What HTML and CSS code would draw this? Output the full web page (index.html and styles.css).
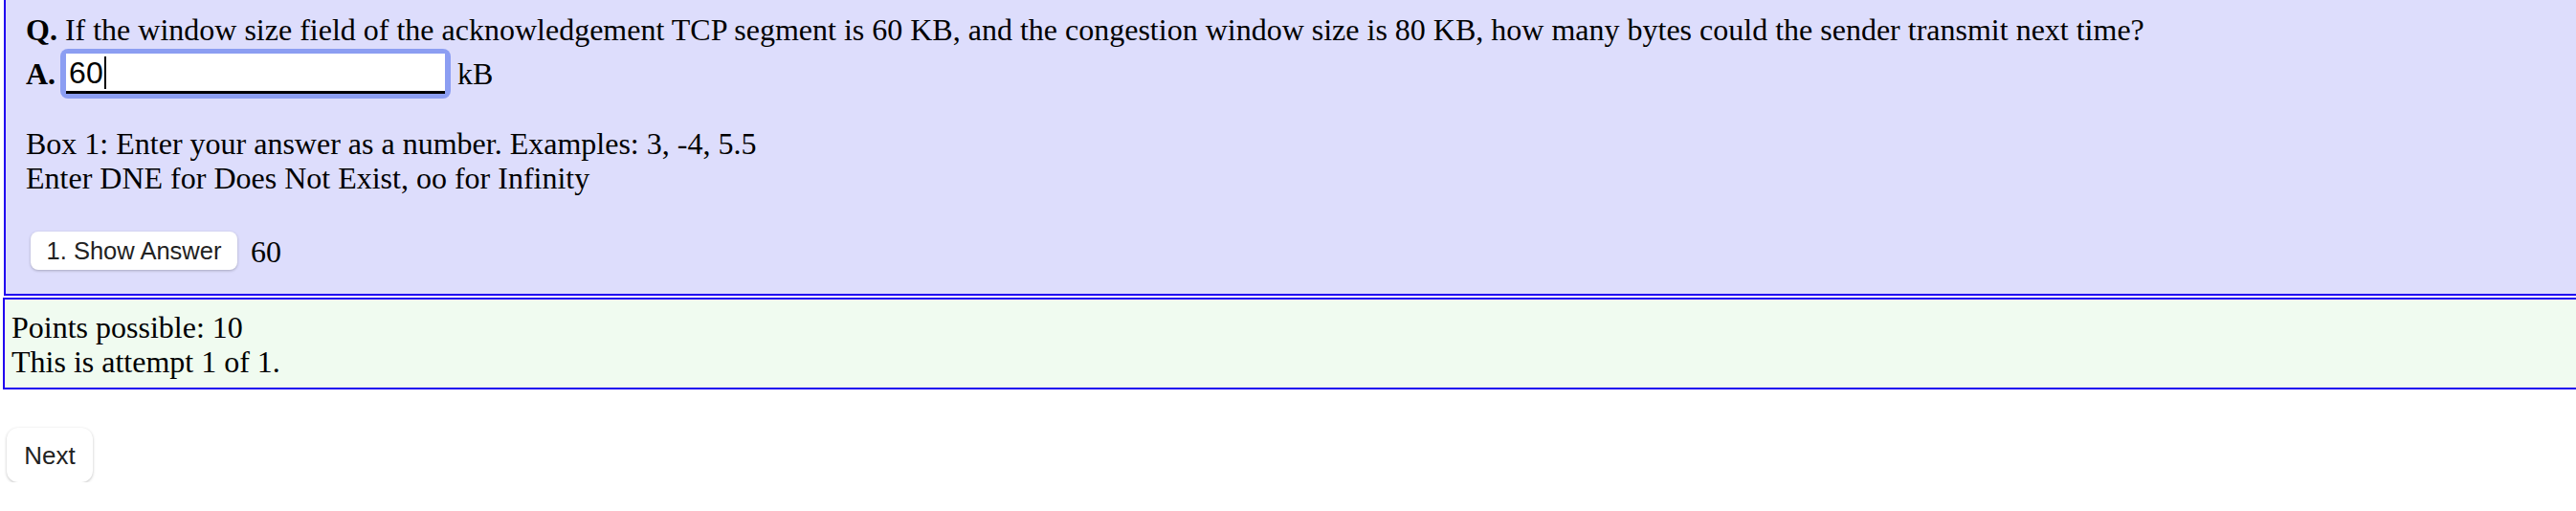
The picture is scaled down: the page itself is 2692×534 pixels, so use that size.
FILE: index.html
```html
<!DOCTYPE html>
<html>
<head>
<meta charset="utf-8">
<link rel="stylesheet" href="styles.css">
</head>
<body>
<div class="question">
  <div class="qline"><b>Q.</b> If the window size field of the acknowledgement TCP segment is 60 KB, and the congestion window size is 80 KB, how many bytes could the sender transmit next time?</div>
  <div class="aline"><b>A.</b> <span class="ring"><span class="field">60<span class="caret"></span></span></span> kB</div>
  <div class="hint">Box 1: Enter your answer as a number. Examples: 3, -4, 5.5<br>Enter DNE for Does Not Exist, oo for Infinity</div>
  <div class="showrow"><span class="btn show">1. Show Answer</span><span class="ans">60</span></div>
</div>
<div class="review">
  Points possible: 10<br>This is attempt 1 of 1.
</div>
<div class="nav"><span class="btn next">Next</span></div>
</body>
</html>
```
FILE: styles.css
```css
html, body {
  margin: 0;
  padding: 0;
  overflow: hidden;
  background: #fff;
}
body {
  font-family: "Liberation Serif", "Times New Roman", serif;
  font-size: 32px;
  line-height: 36px;
  color: #000;
  width: 2800px;
}
.question {
  margin-left: 4px;
  background: #ddddfc;
  border: 2px solid #2000f0;
  border-top: 0;
  padding: 13px 0 25px 21px;
}
.qline {
  height: 37px;
}
.aline {
  height: 54px;
  display: flex;
  align-items: center;
}
.aline b { margin-right: 5px; }
.ring {
  display: inline-block;
  background: #8c9ef2;
  border-radius: 8px;
  padding: 5px 6px 5px 6px;
  margin-right: 7px;
}
.field {
  display: flex;
  align-items: center;
  width: 393px;
  height: 39px;
  padding-left: 3px;
  background: #fff;
  border-bottom: 3px solid #000;
  font-family: "Liberation Sans", Arial, sans-serif;
  font-size: 32px;
}
.caret {
  display: inline-block;
  width: 2px;
  height: 34px;
  background: #000;
  margin-left: 1px;
}
.hint {
  margin-top: 28px;
}
.showrow {
  margin-top: 38px;
  display: flex;
  align-items: center;
  gap: 14px;
  padding-left: 5px;
}
.btn {
  display: inline-flex;
  align-items: center;
  justify-content: center;
  background: #fff;
  font-family: "Liberation Sans", Arial, sans-serif;
  color: #222;
  box-shadow: 0 1px 3px rgba(0,0,0,0.25);
}
.show {
  width: 216px;
  height: 40px;
  border-radius: 8px;
  font-size: 25.5px;
}
.ans {
  margin-top: 2px;
}
.review {
  margin-top: 2px;
  margin-left: 3px;
  background: #f0fbf0;
  border: 2px solid #2000f0;
  padding: 11px 0 9px 7px;
}
.nav {
  padding: 40px 0 0 7px;
}
.next {
  width: 90px;
  height: 57px;
  border-radius: 12px;
  font-size: 26px;
}
```
